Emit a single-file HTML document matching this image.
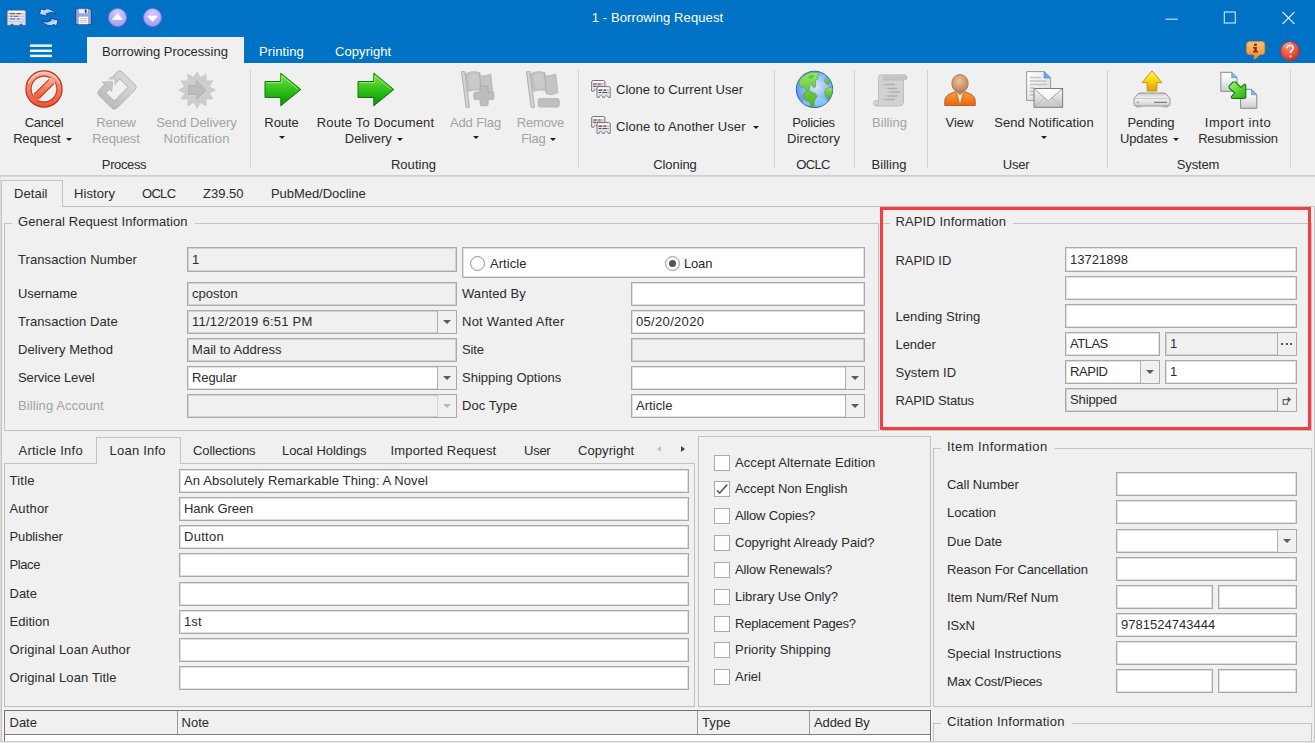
<!DOCTYPE html>
<html><head><meta charset="utf-8"><title>1 - Borrowing Request</title>
<style>
html,body{margin:0;padding:0}
body{width:1315px;height:743px;overflow:hidden;position:relative;background:#f0f0f0;font-family:"Liberation Sans",sans-serif;font-size:13px;color:#2b2b2b}
div,span,svg{position:absolute;box-sizing:border-box}
.t{white-space:nowrap;line-height:16px;height:16px;font-size:13px}
.c{text-align:center}
.d{color:#a3a3a3}
.w{color:#fff}
.f{border:1px solid #a9a9a9;box-shadow:inset 0 0 0 1px rgba(0,0,0,0.12);background:#fff;height:24px;line-height:22px;padding-left:4px;white-space:nowrap;overflow:hidden;font-size:13px}
.ro{background:#f0f0f0}
.h{background:#c2c2c2;height:1px}
.v{background:#c2c2c2;width:1px}
.sep{background:#d2d2d2;width:1px;top:70px;height:98px}
.gb{border:1px solid #c2c2c2}
.gt{background:#f0f0f0;padding:0 7px 0 6px;white-space:nowrap;line-height:16px;height:16px}
.dd{width:19px;border-left:1px solid #b0b0b0;background:#f0f0f0;top:0;right:0;bottom:0}
.ar{width:0;height:0;border-left:4px solid transparent;border-right:4px solid transparent;border-top:4px solid #5a5a5a}
.sa{width:0;height:0;border-left:3px solid transparent;border-right:3px solid transparent;border-top:3px solid #1e1e1e}
.cb{width:16px;height:16px;border:1px solid #ababab;background:#fff}
</style></head>
<body>
<div style="left:0;top:0;width:1315px;height:63px;background:#0072c6"></div>
<div class="t c w" style="left:507.5px;width:300px;top:10px;letter-spacing:0.10px;">1 - Borrowing Request</div>
<svg style="left:1160px;top:5px" width="145" height="24" viewBox="0 0 145 24"><path d="M5.5 14.2H18" stroke="#d4e6f5" stroke-width="1.1" fill="none"/><rect x="64.3" y="7" width="11" height="11" stroke="#d9e9f6" stroke-width="1.1" fill="none"/><path d="M122.5 7L134.5 19M134.5 7L122.5 19" stroke="#d9e9f6" stroke-width="1.1" fill="none"/></svg>
<svg style="left:29px;top:43px" width="24" height="16" viewBox="0 0 24 16"><rect x="0.9" y="1.4" width="22" height="2.5" fill="#fff" opacity="0.93"/><rect x="0.9" y="6.55" width="22" height="2.5" fill="#fff" opacity="0.93"/><rect x="0.9" y="11.7" width="22" height="2.4" fill="#fff" opacity="0.93"/></svg>
<div style="left:87px;top:37px;width:157px;height:26px;background:#f0f0f0"></div>
<div class="t " style="left:102px;top:44px;letter-spacing:-0.03px;">Borrowing Processing</div>
<div class="t w" style="left:259px;top:44px;letter-spacing:0.10px;">Printing</div>
<div class="t w" style="left:335px;top:44px;letter-spacing:0.07px;">Copyright</div>
<div style="left:0;top:175px;width:1315px;height:2px;background:#d7d7d7;border-top:1px solid #cecece"></div>
<div class="sep" style="left:250px"></div>
<div class="sep" style="left:578px"></div>
<div class="sep" style="left:774px"></div>
<div class="sep" style="left:854px"></div>
<div class="sep" style="left:927px"></div>
<div class="sep" style="left:1107px"></div>
<div class="sep" style="left:1290px"></div>
<div class="t c " style="left:-56.0px;width:200px;top:115px;letter-spacing:-0.32px;">Cancel</div>
<div class="t c " style="left:-57.7px;width:200px;top:131px;letter-spacing:-0.15px;">Request<span class="sa" style="position:relative;display:inline-block;top:-2px;margin-left:5px"></span></div>
<div class="t c d" style="left:16.0px;width:200px;top:115px;letter-spacing:-0.18px;">Renew</div>
<div class="t c d" style="left:16.0px;width:200px;top:131px;letter-spacing:-0.15px;">Request</div>
<div class="t c d" style="left:96.5px;width:200px;top:115px;letter-spacing:-0.03px;">Send Delivery</div>
<div class="t c d" style="left:96.5px;width:200px;top:131px;letter-spacing:0.15px;">Notification</div>
<div class="t c " style="left:24.0px;width:200px;top:157px;letter-spacing:-0.38px;">Process</div>
<div class="t c " style="left:181.5px;width:200px;top:115px;letter-spacing:-0.07px;">Route</div>
<div class="sa" style="left:278.5px;top:136px"></div>
<div class="t c " style="left:275.5px;width:200px;top:115px;letter-spacing:0.17px;">Route To Document</div>
<div class="t c " style="left:273.8px;width:200px;top:131px;letter-spacing:0.02px;">Delivery<span class="sa" style="position:relative;display:inline-block;top:-2px;margin-left:5px"></span></div>
<div class="t c d" style="left:375.5px;width:200px;top:115px;letter-spacing:-0.11px;">Add Flag</div>
<div class="sa" style="left:472.5px;top:136px"></div>
<div class="t c d" style="left:440.5px;width:200px;top:115px;letter-spacing:-0.19px;">Remove</div>
<div class="t c d" style="left:438.79999999999995px;width:200px;top:131px;letter-spacing:-0.24px;">Flag<span class="sa" style="position:relative;display:inline-block;top:-2px;margin-left:5px"></span></div>
<div class="t c " style="left:313.5px;width:200px;top:157px;letter-spacing:0.05px;">Routing</div>
<div class="t " style="left:616px;top:82px;letter-spacing:0.03px;">Clone to Current User</div>
<div class="t " style="left:616px;top:118.5px;letter-spacing:0.08px;">Clone to Another User<span class="sa" style="position:relative;display:inline-block;top:-2px;margin-left:7px"></span></div>
<div class="t c " style="left:575.0px;width:200px;top:157px;letter-spacing:-0.08px;">Cloning</div>
<div class="t c " style="left:713.5px;width:200px;top:115px;letter-spacing:-0.26px;">Policies</div>
<div class="t c " style="left:713.5px;width:200px;top:131px;letter-spacing:0.12px;">Directory</div>
<div class="t c " style="left:713.0px;width:200px;top:157px;letter-spacing:-0.70px;">OCLC</div>
<div class="t c d" style="left:789.5px;width:200px;top:115px;letter-spacing:0.02px;">Billing</div>
<div class="t c " style="left:789.0px;width:200px;top:157px;letter-spacing:0.02px;">Billing</div>
<div class="t c " style="left:859.5px;width:200px;top:115px;letter-spacing:-0.02px;">View</div>
<div class="t c " style="left:944.0px;width:200px;top:115px;letter-spacing:0.07px;">Send Notification</div>
<div class="sa" style="left:1041px;top:136px"></div>
<div class="t c " style="left:916.0px;width:200px;top:157px;letter-spacing:-0.25px;">User</div>
<div class="t c " style="left:1051.0px;width:200px;top:115px;letter-spacing:-0.11px;">Pending</div>
<div class="t c " style="left:1049.3px;width:200px;top:131px;letter-spacing:-0.09px;">Updates<span class="sa" style="position:relative;display:inline-block;top:-2px;margin-left:5px"></span></div>
<div class="t c " style="left:1138.0px;width:200px;top:115px;letter-spacing:0.44px;">Import into</div>
<div class="t c " style="left:1138.0px;width:200px;top:131px;letter-spacing:-0.16px;">Resubmission</div>
<div class="t c " style="left:1098.0px;width:200px;top:157px;letter-spacing:-0.13px;">System</div>
<svg width="0" height="0" style="left:0;top:0"><defs>
<linearGradient id="gGreen" x1="0" y1="0" x2="0" y2="1"><stop offset="0" stop-color="#7be04a"/><stop offset="0.5" stop-color="#34c21a"/><stop offset="1" stop-color="#0c8f06"/></linearGradient>
<linearGradient id="gRed" x1="0" y1="0" x2="0" y2="1"><stop offset="0" stop-color="#ffb6a0"/><stop offset="0.5" stop-color="#f47a5c"/><stop offset="1" stop-color="#ec5634"/></linearGradient>
<linearGradient id="gGray" x1="0" y1="0" x2="0" y2="1"><stop offset="0" stop-color="#d9d9d9"/><stop offset="1" stop-color="#bcbcbc"/></linearGradient>
<linearGradient id="gOrange" x1="0" y1="0" x2="0" y2="1"><stop offset="0" stop-color="#f9a04a"/><stop offset="1" stop-color="#e8650e"/></linearGradient>
<radialGradient id="gHead" cx="0.45" cy="0.35" r="0.7"><stop offset="0" stop-color="#e8c497"/><stop offset="1" stop-color="#b97a4c"/></radialGradient>
<radialGradient id="gGlobe" cx="0.4" cy="0.3" r="0.8"><stop offset="0" stop-color="#8fc6ff"/><stop offset="0.6" stop-color="#3f8df0"/><stop offset="1" stop-color="#1f5fd0"/></radialGradient>
<linearGradient id="gYellow" x1="0" y1="0" x2="0" y2="1"><stop offset="0" stop-color="#fff56e"/><stop offset="0.45" stop-color="#ffd90a"/><stop offset="1" stop-color="#dba008"/></linearGradient>
<linearGradient id="gDrive" x1="0" y1="0" x2="0" y2="1"><stop offset="0" stop-color="#c9c9c9"/><stop offset="0.4" stop-color="#f4f4f4"/><stop offset="1" stop-color="#d0d0d0"/></linearGradient>
<linearGradient id="gDoc" x1="0" y1="0" x2="1" y2="1"><stop offset="0" stop-color="#ffffff"/><stop offset="1" stop-color="#d4d4d4"/></linearGradient>
<linearGradient id="gInfo" x1="0" y1="0" x2="0" y2="1"><stop offset="0" stop-color="#fdc27a"/><stop offset="1" stop-color="#f08a2a"/></linearGradient>
<radialGradient id="gHelp" cx="0.4" cy="0.3" r="0.8"><stop offset="0" stop-color="#f58a76"/><stop offset="0.7" stop-color="#e0442e"/><stop offset="1" stop-color="#c02a18"/></radialGradient>
<radialGradient id="gLav" cx="0.5" cy="0.25" r="0.85"><stop offset="0" stop-color="#d2ccff"/><stop offset="1" stop-color="#9f95f2"/></radialGradient>
<linearGradient id="gEnv" x1="0" y1="0" x2="0" y2="1"><stop offset="0" stop-color="#f6f6f6"/><stop offset="1" stop-color="#c4c4c4"/></linearGradient>
</defs></svg>
<svg style="left:7px;top:10.2px" width="19" height="16" viewBox="0 0 19 16"><path d="M0.5 2Q0.5 0.5 2 0.5H17Q18.5 0.5 18.5 2V15H15.5V13.2H12.8V15H6.2V13.2H3.5V15H0.5Z" fill="#f4f2f4" stroke="#b0a090" stroke-width="0.7"/><path d="M1 3.7H18" stroke="#f4a0a8" stroke-width="1.1"/><path d="M3 3.7H8M9.5 3.7H14" stroke="#503838" stroke-width="0.9"/><path d="M1 6.3H18M1 8.9H18M1 11.5H18" stroke="#b4c6f8" stroke-width="1.5"/><path d="M3.2 6.3H5.5M7 6.3H11M3.2 8.9H8M10 8.9H12.5" stroke="#585868" stroke-width="0.9"/><path d="M0.8 13.4H18.2" stroke="#e4dcd4" stroke-width="1"/></svg><svg style="left:39.4px;top:8px" width="20" height="19" viewBox="0 0 20 19"><defs><linearGradient id="gRef" x1="0" y1="0" x2="1" y2="1"><stop offset="0" stop-color="#eaf6ff"/><stop offset="1" stop-color="#58acf4"/></linearGradient></defs><path d="M0.4 6.5L2 0.5L4.5 2Q10.6 -1.6 17.3 5.8Q11.4 3.2 7.3 6L8.5 8.3Z" fill="url(#gRef)" stroke="#0a3cae" stroke-width="0.9" stroke-linejoin="round"/><g transform="rotate(180 9.75 9.25)"><path d="M0.4 6.5L2 0.5L4.5 2Q10.6 -1.6 17.3 5.8Q11.4 3.2 7.3 6L8.5 8.3Z" fill="url(#gRef)" stroke="#0a3cae" stroke-width="0.9" stroke-linejoin="round"/></g></svg><svg style="left:75px;top:7.9px" width="17" height="17.5" viewBox="0 0 17 17.5"><path d="M0.7 0.7H14.6L16.4 2.5V16.6H0.7Z" fill="#93a6e2" stroke="#2c3f92" stroke-width="1"/><rect x="3.5" y="0.9" width="9.6" height="4.8" fill="#eceff6" stroke="#7486c0" stroke-width="0.4"/><rect x="9.8" y="1.5" width="1.8" height="3.3" fill="#26387e"/><rect x="3.3" y="8.2" width="10.2" height="8" fill="#fafafc" stroke="#7486c0" stroke-width="0.4"/><path d="M4.8 10.6H12M4.8 12.4H12M4.8 14.2H12" stroke="#b4bccc" stroke-width="0.8"/></svg><svg style="left:108.2px;top:8.2px" width="19" height="19" viewBox="0 0 19 19"><circle cx="9.5" cy="9.5" r="9" fill="url(#gLav)" stroke="#8078dc" stroke-width="0.9"/><path d="M3.8 11.8L9.5 5.6L15.2 11.8Z" fill="#fff"/></svg><svg style="left:142.5px;top:8.2px" width="19" height="19" viewBox="0 0 19 19"><circle cx="9.5" cy="9.5" r="9" fill="url(#gLav)" stroke="#8078dc" stroke-width="0.9"/><path d="M3.8 7.7L9.5 13.9L15.2 7.7Z" fill="#fff"/></svg>
<svg style="left:24.3px;top:69.35px" width="40" height="40" viewBox="0 0 40 40"><circle cx="20" cy="20" r="18.1" fill="url(#gRed)" stroke="#b93222" stroke-width="1.2"/><circle cx="20" cy="20" r="12.9" fill="#f1eeee" stroke="#bf3a24" stroke-width="1.1"/><path d="M8.2 27.2L27.2 8.2L31.8 12.8L12.8 31.8Z" fill="url(#gRed)"/><path d="M10.3 25.1L25.1 10.3M14.9 29.7L29.7 14.9" stroke="#bf3a24" stroke-width="1.1"/><path d="M4.5 14Q9 4 20 3.6Q31 4 35.5 14" fill="none" stroke="#ffd0c0" stroke-width="1.6" opacity="0.7"/></svg>
<svg style="left:96.5px;top:69.5px" width="40" height="40" viewBox="0 0 40 40"><g transform="translate(20,20) rotate(45)"><path fill-rule="evenodd" d="M-9 -16.5H9Q12.6 -16.5 12.6 -12.9V12.9Q12.6 16.5 9 16.5H-9Q-12.6 16.5 -12.6 12.9V-12.9Q-12.6 -16.5 -9 -16.5Z M-5.9 -9.8V9.8H5.9V-9.8Z" fill="url(#gGray)" stroke="#adadad" stroke-width="0.9"/><path d="M-16.2 4.6L-9.25 -2.9L-2.3 4.6Z" fill="#c6c6c6" stroke="#adadad" stroke-width="0.7"/><path d="M-14.2 -2.6L-13.2 -6.5L-9.25 -7.8L-5.4 -6.5L-4.6 -2.6" fill="#c9c9c9" stroke="none"/><path d="M-17.3 4.3L-9.25 -4.6L-1.2 4.3" stroke="#f0f0f0" stroke-width="1.5" fill="none"/></g></svg>
<svg style="left:177px;top:69.5px" width="40" height="40" viewBox="0 0 40 40"><polygon points="20.0,1.7 23.3,7.6 29.1,4.2 29.1,10.9 35.8,10.8 32.4,16.7 38.3,20.0 32.4,23.3 35.8,29.1 29.1,29.1 29.1,35.8 23.3,32.4 20.0,38.3 16.7,32.4 10.9,35.8 10.9,29.1 4.2,29.2 7.6,23.3 1.7,20.0 7.6,16.7 4.2,10.8 10.9,10.9 10.8,4.2 16.7,7.6" fill="#cdcdcd" stroke="#c2c2c2" stroke-width="0.6"/><path d="M11.5 15.5H19.5V10.5L29 20L19.5 29.5V24.5H11.5Z" fill="#bcbcbc" stroke="#adadad" stroke-width="0.7"/></svg>
<svg style="left:264px;top:72px" width="38" height="35" viewBox="0 0 38 35"><path d="M1 9.5H16.8V1.2L36.8 17.5L16.8 33.8V25.5H1Z" fill="url(#gGreen)" stroke="#0a7a05" stroke-width="1" stroke-linejoin="round"/><path d="M2.2 10.7H17.7V4L33.5 17" fill="none" stroke="#a8f080" stroke-width="1" opacity="0.8"/></svg>
<svg style="left:357px;top:72px" width="38" height="35" viewBox="0 0 38 35"><path d="M1 9.5H16.8V1.2L36.8 17.5L16.8 33.8V25.5H1Z" fill="url(#gGreen)" stroke="#0a7a05" stroke-width="1" stroke-linejoin="round"/><path d="M2.2 10.7H17.7V4L33.5 17" fill="none" stroke="#a8f080" stroke-width="1" opacity="0.8"/></svg>
<svg style="left:461px;top:70.5px" width="35" height="37" viewBox="0 0 35 37"><path d="M2.3 1.6L6.7 35.4" stroke="#b4b4b4" stroke-width="4.4" stroke-linecap="round"/><path d="M2.3 1.8L6.7 35.2" stroke="#d6d6d6" stroke-width="2" stroke-linecap="round"/><path d="M5 2.6C9 0.6 14 0.1 18.6 1.6L19 4.9C22 5.1 26 4.5 29.8 3L31.8 21.6C28 23.8 23 24.1 20.5 22.6L20.1 19.5C15 18.5 10.5 19 7.3 20.6Z" fill="#c4c4c4" stroke="#b3b3b3" stroke-width="0.8"/><path d="M18.6 1.8L20.4 22.4" stroke="#b0b0b0" stroke-width="1.2"/><path d="M8 4.5C11 3.2 14 3 17 3.8L18.3 17C15 16.3 12 16.5 9.3 17.6Z" fill="#cfcfcf" opacity="0.7"/><path d="M20.6 15H25.6Q27.1 15 27.1 16.5V21.1H31.4Q32.9 21.1 32.9 22.6V27.1Q32.9 28.6 31.4 28.6H27.1V33.2Q27.1 34.7 25.6 34.7H20.6Q19.1 34.7 19.1 33.2V28.6H14.3Q12.8 28.6 12.8 27.1V22.6Q12.8 21.1 14.3 21.1H19.1V16.5Q19.1 15 20.6 15Z" fill="#bdbdbd" stroke="#ababab" stroke-width="0.8"/></svg>
<svg style="left:526px;top:70.5px" width="35" height="37" viewBox="0 0 35 37"><path d="M2.3 1.6L6.7 35.4" stroke="#b4b4b4" stroke-width="4.4" stroke-linecap="round"/><path d="M2.3 1.8L6.7 35.2" stroke="#d6d6d6" stroke-width="2" stroke-linecap="round"/><path d="M5 2.6C9 0.6 14 0.1 18.6 1.6L19 4.9C22 5.1 26 4.5 29.8 3L31.8 21.6C28 23.8 23 24.1 20.5 22.6L20.1 19.5C15 18.5 10.5 19 7.3 20.6Z" fill="#c4c4c4" stroke="#b3b3b3" stroke-width="0.8"/><path d="M18.6 1.8L20.4 22.4" stroke="#b0b0b0" stroke-width="1.2"/><path d="M8 4.5C11 3.2 14 3 17 3.8L18.3 17C15 16.3 12 16.5 9.3 17.6Z" fill="#cfcfcf" opacity="0.7"/><rect x="12.2" y="27.6" width="21" height="8.4" rx="2" fill="#c0c0c0" stroke="#adadad" stroke-width="0.8"/></svg>
<svg style="left:590.5px;top:79.8px" width="21" height="19" viewBox="0 0 21 19"><g transform="translate(0.2,0)"><path d="M0.5 2Q0.5 0.5 2 0.5H12.2Q13.7 0.5 13.7 2V11.2H11.6Q11.4 9.2 9.8 9.2Q8.2 9.2 8 11.2H6.2Q6 9.2 4.4 9.2Q2.8 9.2 2.6 11.2H0.5Z" fill="#fbfbfb" stroke="#727272" stroke-width="1"/><path d="M1.2 8.6H13" stroke="#dedad2" stroke-width="1.6"/><path d="M1.2 4H13" stroke="#f6a8a8" stroke-width="1.5"/><path d="M2.2 4H5.5M7 4H9.5" stroke="#5a4a4a" stroke-width="1.1"/><path d="M1.2 6.4H13" stroke="#8fb0f2" stroke-width="1.5"/><path d="M2.5 6.4H4.5M6 6.4H10.5" stroke="#4a5060" stroke-width="1.1"/></g><g transform="translate(5.5,6.1)"><path d="M0.5 2Q0.5 0.5 2 0.5H12.2Q13.7 0.5 13.7 2V11.2H11.6Q11.4 9.2 9.8 9.2Q8.2 9.2 8 11.2H6.2Q6 9.2 4.4 9.2Q2.8 9.2 2.6 11.2H0.5Z" fill="#fbfbfb" stroke="#727272" stroke-width="1"/><path d="M1.2 8.6H13" stroke="#dedad2" stroke-width="1.6"/><path d="M1.2 4H13" stroke="#f6a8a8" stroke-width="1.5"/><path d="M2.2 4H5.5M7 4H9.5" stroke="#5a4a4a" stroke-width="1.1"/><path d="M1.2 6.4H13" stroke="#8fb0f2" stroke-width="1.5"/><path d="M2.5 6.4H4.5M6 6.4H10.5" stroke="#4a5060" stroke-width="1.1"/></g></svg>
<svg style="left:590.5px;top:116.4px" width="21" height="19" viewBox="0 0 21 19"><g transform="translate(0.2,0)"><path d="M0.5 2Q0.5 0.5 2 0.5H12.2Q13.7 0.5 13.7 2V11.2H11.6Q11.4 9.2 9.8 9.2Q8.2 9.2 8 11.2H6.2Q6 9.2 4.4 9.2Q2.8 9.2 2.6 11.2H0.5Z" fill="#fbfbfb" stroke="#727272" stroke-width="1"/><path d="M1.2 8.6H13" stroke="#dedad2" stroke-width="1.6"/><path d="M1.2 4H13" stroke="#f6a8a8" stroke-width="1.5"/><path d="M2.2 4H5.5M7 4H9.5" stroke="#5a4a4a" stroke-width="1.1"/><path d="M1.2 6.4H13" stroke="#8fb0f2" stroke-width="1.5"/><path d="M2.5 6.4H4.5M6 6.4H10.5" stroke="#4a5060" stroke-width="1.1"/></g><g transform="translate(5.5,6.1)"><path d="M0.5 2Q0.5 0.5 2 0.5H12.2Q13.7 0.5 13.7 2V11.2H11.6Q11.4 9.2 9.8 9.2Q8.2 9.2 8 11.2H6.2Q6 9.2 4.4 9.2Q2.8 9.2 2.6 11.2H0.5Z" fill="#fbfbfb" stroke="#727272" stroke-width="1"/><path d="M1.2 8.6H13" stroke="#dedad2" stroke-width="1.6"/><path d="M1.2 4H13" stroke="#f6a8a8" stroke-width="1.5"/><path d="M2.2 4H5.5M7 4H9.5" stroke="#5a4a4a" stroke-width="1.1"/><path d="M1.2 6.4H13" stroke="#8fb0f2" stroke-width="1.5"/><path d="M2.5 6.4H4.5M6 6.4H10.5" stroke="#4a5060" stroke-width="1.1"/></g></svg>
<svg style="left:795px;top:70px" width="39" height="39" viewBox="0 0 39 39"><defs><clipPath id="cpG"><circle cx="19.5" cy="19.4" r="18"/></clipPath><radialGradient id="gOcean" cx="0.55" cy="0.42" r="0.62"><stop offset="0" stop-color="#dbe9ff"/><stop offset="0.55" stop-color="#8db9f8"/><stop offset="1" stop-color="#4f8fea"/></radialGradient><linearGradient id="gLand" x1="0" y1="0" x2="0" y2="1"><stop offset="0" stop-color="#9be66a"/><stop offset="0.5" stop-color="#6cc845"/><stop offset="1" stop-color="#55b032"/></linearGradient></defs><circle cx="19.5" cy="19.4" r="18.2" fill="url(#gOcean)" stroke="#2f62cf" stroke-width="1"/><ellipse cx="20" cy="32" rx="12" ry="4.5" fill="#9ad8ff" opacity="0.6" clip-path="url(#cpG)"/><g clip-path="url(#cpG)" fill="url(#gLand)" stroke="#4fa52e" stroke-width="0.7" stroke-linejoin="round"><path d="M3.9 11.5L6.1 7.7L10.8 4.5L16.5 2.2L24.7 2.8L22.2 6.4L22.8 8.6L20.3 10.2L20.9 15.9L19.4 17.8L17.5 16.5L17.2 13.4L14.6 15.9L14 19.7L15.9 22.2L20.3 23.5L21.9 26.6L19 31.1L19 37.5L15.3 37.5L15.3 32.3L10.2 30.4L8 26L9.9 22.2L12.1 21L10.2 19L7.7 15.9L6.1 17.8L4.5 15.3Z"/><path d="M29.2 10.2L31.4 7.3L34.9 12.1L33 14.6L30.4 12.7Z"/><path d="M29.5 22.2L31.1 18.7L35.5 17.2L38 18.5L36.5 26.6L33 29.2L30.8 26Z"/></g><ellipse cx="16.2" cy="6.6" rx="2.9" ry="1.6" transform="rotate(-25 16.2 6.6)" fill="#58b86a" opacity="0.8"/></svg>
<svg style="left:873px;top:73.5px" width="35" height="33" viewBox="0 0 35 33"><path d="M5.5 3.5Q5.5 0.8 9 0.8H31Q34 0.8 34 3.5Q34 6 31 6H30.5V27Q30.5 32 26 32H3.5Q0.6 32 0.6 29Q0.6 26.5 3.5 26.5H5.5Z" fill="#d2d2d2" stroke="#bababa" stroke-width="0.9"/><path d="M10 1.4H31.3Q33.8 1.4 33.8 3.6Q33.8 5.9 31.3 5.9H10Z" fill="#c4c4c4"/><path d="M9 6H30.5" stroke="#b8b8b8" stroke-width="0.8"/><path d="M5.5 26.5V29Q5.5 32 3.5 32" fill="none" stroke="#bababa" stroke-width="0.8"/><path d="M12 10.5H22M14.5 14.5H24.5M17 18H27M14.5 22H24.5M12 25.5H22" stroke="#b0b0b0" stroke-width="1.6"/><path d="M10 10.5H11M12.5 14.5H13.5M15 18H16M12.5 22H13.5M10 25.5H11" stroke="#a8a8a8" stroke-width="1.2"/></svg>
<svg style="left:944px;top:73.8px" width="32" height="32.5" viewBox="0 0 32 32.5"><path d="M0.8 31.6V27.5Q1 21.2 7 19.4L12.5 17.4H19.5L25 19.4Q31 21.2 31.2 27.5V31.6Z" fill="url(#gOrange)" stroke="#b8500c" stroke-width="0.9"/><path d="M12 19.5L15 30.5M20 19.5L17 30.5" stroke="#d86a14" stroke-width="0.7" fill="none"/><path d="M13.5 18.5L16 29L18.5 18.5Z" fill="#fff8f0" stroke="#d8d0c8" stroke-width="0.4"/><path d="M13 18.3L16 21.5L19 18.3" fill="#c8864f" stroke="none"/><ellipse cx="16" cy="9.5" rx="8.2" ry="9" fill="url(#gHead)" stroke="#a86a3c" stroke-width="0.8"/></svg>
<svg style="left:1026.2px;top:71px" width="37.5" height="37" viewBox="0 0 37.5 37"><path d="M0.6 0.6H18L24.6 7V29.4H0.6Z" fill="url(#gDoc)" stroke="#8f8f8f" stroke-width="0.9"/><path d="M18 0.6L24.6 7H18Z" fill="#5ea8ec" stroke="#3c86d0" stroke-width="0.6"/><path d="M4 6.5H15M4 10H20.5M4 13.5H20.5M4 17H8M4 20.5H8M4 24H8" stroke="#c4c4c4" stroke-width="1.3"/><rect x="8" y="17.5" width="28.6" height="18.8" fill="url(#gEnv)" stroke="#7e7e7e" stroke-width="1"/><path d="M8.5 18L22.3 30L36 18" fill="#fbfbfb" stroke="#9a9a9a" stroke-width="0.9"/><path d="M8.5 36L18.5 26.5M36 36L26 26.5" stroke="#b0b0b0" stroke-width="0.8"/></svg>
<svg style="left:1132.5px;top:70px" width="38" height="38" viewBox="0 0 38 38"><path d="M19 0.8L28.8 12.6H23.8V21H14.2V12.6H9.2Z" fill="url(#gYellow)" stroke="#c08a10" stroke-width="0.9" stroke-linejoin="round"/><path d="M5.8 23H32.2L37 28.5V34Q37 36 35 36H3Q1 36 1 34V28.5Z" fill="url(#gDrive)" stroke="#8c8c8c" stroke-width="0.9"/><path d="M1.5 28.5H36.5" stroke="#b5b5b5" stroke-width="0.7"/><circle cx="4.8" cy="32.3" r="0.9" fill="#4cc21e"/><path d="M21 32.3H34" stroke="#6a6a6a" stroke-width="1"/><path d="M3 36.8H8M30 36.8H35" stroke="#9a9a9a" stroke-width="0.9"/></svg>
<svg style="left:1220px;top:70.5px" width="38" height="38" viewBox="0 0 38 38"><defs><linearGradient id="gDocV" x1="0" y1="0" x2="0" y2="1"><stop offset="0" stop-color="#ffffff"/><stop offset="0.35" stop-color="#f4f4f4"/><stop offset="1" stop-color="#cdcdcd"/></linearGradient><linearGradient id="gGreen2" x1="0" y1="0" x2="1" y2="1"><stop offset="0" stop-color="#b4f58a"/><stop offset="0.5" stop-color="#62d23a"/><stop offset="1" stop-color="#2faa14"/></linearGradient></defs><g transform="translate(0.3,0.8)"><path d="M0.5 0.5H11.3L16.7 5.9V19.5H0.5Z" fill="url(#gDocV)" stroke="#8a8a8a" stroke-width="1"/><path d="M11.3 0.5L16.7 5.9H11.3Z" fill="#78b8f4" stroke="#3c86d0" stroke-width="0.5"/></g><g transform="translate(20.1,17.8)"><path d="M0.5 0.5H11.3L16.7 5.9V19.5H0.5Z" fill="url(#gDocV)" stroke="#8a8a8a" stroke-width="1"/><path d="M11.3 0.5L16.7 5.9H11.3Z" fill="#78b8f4" stroke="#3c86d0" stroke-width="0.5"/></g><path d="M8.9 15.3L13 11H15.4L20.7 16.2L24.7 13.1L25.8 14.1V26.5L24.7 27.4H12L11.1 25.8L14.8 21.8L9.6 17.5Z" fill="url(#gGreen2)" stroke="#0e7a0a" stroke-width="1.1" stroke-linejoin="round"/></svg>
<svg style="left:1246px;top:41px" width="19.5" height="19.2" viewBox="0 0 19.5 19.2"><path d="M3.4 0.6H15.8Q18.8 0.6 18.8 3.6V10.6Q18.8 13.6 15.8 13.6H14L8.3 18.6L8 13.6H3.4Q0.6 13.6 0.6 10.6V3.6Q0.6 0.6 3.4 0.6Z" fill="url(#gInfo)" stroke="#e8861e" stroke-width="0.9" stroke-linejoin="round"/><rect x="8.1" y="2.6" width="2.7" height="2.3" fill="#962a06"/><path d="M7 6.1H10.8V10H12V11.5H7V10H8.3V7.5H7Z" fill="#962a06"/></svg>
<svg style="left:1280px;top:40.5px" width="20" height="20" viewBox="0 0 20 20"><circle cx="10" cy="10" r="9.4" fill="url(#gHelp)" stroke="#b8301c" stroke-width="0.7"/><path d="M7 7.3Q7 4.3 10.1 4.3Q13.2 4.3 13.2 7Q13.2 8.6 11.6 9.5Q10.4 10.2 10.4 12.2" fill="none" stroke="#fff" stroke-width="1.7" opacity="0.95"/><circle cx="10.4" cy="15.3" r="1.15" fill="#fff" opacity="0.95"/><path d="M3.5 6.5Q6 2 11 1.6" fill="none" stroke="#ffc0b0" stroke-width="1.2" opacity="0.6"/></svg>
<div class="h" style="left:1px;top:206px;width:1314px"></div>
<div class="v" style="left:1px;top:206px;height:537px"></div>
<div class="v" style="left:1314px;top:206px;height:535px"></div>
<div style="left:0;top:177px;width:1px;height:566px;background:#e1dcdb"></div>
<div style="left:1px;top:180px;width:62px;height:27px;border:1px solid #c2c2c2;border-bottom:none;background:#f0f0f0"></div>
<div class="t " style="left:14px;top:186px;letter-spacing:0.05px;">Detail</div>
<div class="t " style="left:74px;top:186px;letter-spacing:0.08px;">History</div>
<div class="t " style="left:142px;top:186px;letter-spacing:-0.70px;">OCLC</div>
<div class="t " style="left:203px;top:186px;letter-spacing:0.01px;">Z39.50</div>
<div class="t " style="left:271px;top:186px;letter-spacing:-0.05px;">PubMed/Docline</div>
<div class="gb" style="left:4px;top:223px;width:875px;height:208px"></div><div class="gt" style="left:12px;top:214px;letter-spacing:0.10px;">General Request Information</div>
<div class="t " style="left:18px;top:252px;letter-spacing:0.09px;">Transaction Number</div>
<div class="f ro" style="left:187px;top:247px;width:270px;height:25px;line-height:23px;letter-spacing:0.03px;">1</div>
<div class="t " style="left:18px;top:286px;letter-spacing:-0.12px;">Username</div>
<div class="f ro" style="left:187px;top:282px;width:270px;height:24px;line-height:22px;letter-spacing:0.03px;">cposton</div>
<div class="t " style="left:18px;top:314px;letter-spacing:0.08px;">Transaction Date</div>
<div class="f ro" style="left:187px;top:310px;width:270px;height:24px;line-height:22px;letter-spacing:0.25px;">11/12/2019 6:51 PM<div class="dd "><div class="ar" style="left:5px;top:9px"></div></div></div>
<div class="t " style="left:18px;top:342px;letter-spacing:0.07px;">Delivery Method</div>
<div class="f ro" style="left:187px;top:338px;width:270px;height:24px;line-height:22px;letter-spacing:0.05px;">Mail to Address</div>
<div class="t " style="left:18px;top:370px;letter-spacing:-0.12px;">Service Level</div>
<div class="f " style="left:187px;top:366px;width:270px;height:24px;line-height:22px;letter-spacing:-0.10px;">Regular<div class="dd "><div class="ar" style="left:5px;top:9px"></div></div></div>
<div class="t d" style="left:18px;top:398px;letter-spacing:0.08px;">Billing Account</div>
<div class="f ro" style="left:187px;top:394px;width:270px;height:24px;line-height:22px;"><div class="dd" style="border-left-color:#d5d5d5"><div class="ar" style="left:5px;top:9px;border-top-color:#b8b8b8"></div></div></div>
<div class="f" style="left:462px;top:247px;width:403px;height:31px"></div>
<div style="left:470px;top:256px;width:15px;height:15px;border:1px solid #979797;border-radius:50%;background:#fff;box-shadow:inset 0 0 0 1px rgba(0,0,0,0.06)"></div>
<div class="t " style="left:490px;top:255.5px;letter-spacing:0.04px;">Article</div>
<div style="left:665px;top:256px;width:15px;height:15px;border:1px solid #979797;border-radius:50%;background:#fff;box-shadow:inset 0 0 0 1px rgba(0,0,0,0.06)"></div>
<div style="left:669px;top:260px;width:7px;height:7px;border-radius:50%;background:#555"></div>
<div class="t " style="left:684px;top:255.5px;letter-spacing:-0.17px;">Loan</div>
<div class="t " style="left:462px;top:286px;letter-spacing:0.08px;">Wanted By</div>
<div class="f " style="left:631px;top:282px;width:234px;height:24px;line-height:22px;"></div>
<div class="t " style="left:462px;top:314px;letter-spacing:0.25px;">Not Wanted After</div>
<div class="f " style="left:631px;top:310px;width:234px;height:24px;line-height:22px;letter-spacing:0.32px;">05/20/2020</div>
<div class="t " style="left:462px;top:342px;letter-spacing:-0.13px;">Site</div>
<div class="f ro" style="left:631px;top:338px;width:234px;height:24px;line-height:22px;"></div>
<div class="t " style="left:462px;top:370px;letter-spacing:0.02px;">Shipping Options</div>
<div class="f " style="left:631px;top:366px;width:234px;height:24px;line-height:22px;"><div class="dd "><div class="ar" style="left:5px;top:9px"></div></div></div>
<div class="t " style="left:462px;top:398px;letter-spacing:0.07px;">Doc Type</div>
<div class="f " style="left:631px;top:394px;width:234px;height:24px;line-height:22px;letter-spacing:0.04px;">Article<div class="dd "><div class="ar" style="left:5px;top:9px"></div></div></div>
<div class="gb" style="left:882px;top:223px;width:430px;height:208px"></div><div class="gt" style="left:889.5px;top:214px;letter-spacing:0.13px;">RAPID Information</div>
<div class="t " style="left:895.5px;top:252.5px;letter-spacing:-0.08px;">RAPID ID</div>
<div class="t " style="left:895.5px;top:308.5px;letter-spacing:0.07px;">Lending String</div>
<div class="t " style="left:895.5px;top:336.5px;letter-spacing:-0.05px;">Lender</div>
<div class="t " style="left:895.5px;top:364.5px;letter-spacing:0.08px;">System ID</div>
<div class="t " style="left:895.5px;top:392.5px;letter-spacing:-0.15px;">RAPID Status</div>
<div class="f " style="left:1065px;top:247px;width:232px;height:25px;line-height:23px;letter-spacing:0.03px;">13721898</div>
<div class="f " style="left:1065px;top:276px;width:232px;height:24px;line-height:22px;"></div>
<div class="f " style="left:1065px;top:304px;width:232px;height:24px;line-height:22px;"></div>
<div class="f " style="left:1065px;top:332px;width:95px;height:24px;line-height:22px;letter-spacing:-0.49px;">ATLAS</div>
<div class="f ro" style="left:1165px;top:332px;width:132px;height:24px;line-height:22px;letter-spacing:0.03px;">1<div class="dd"><div style="left:3px;top:10px;width:2px;height:2px;background:#555"></div><div style="left:7.5px;top:10px;width:2px;height:2px;background:#555"></div><div style="left:12px;top:10px;width:2px;height:2px;background:#555"></div></div></div>
<div class="f " style="left:1065px;top:360px;width:95px;height:24px;line-height:22px;letter-spacing:-0.44px;">RAPID<div class="dd "><div class="ar" style="left:5px;top:9px"></div></div></div>
<div class="f " style="left:1165px;top:360px;width:132px;height:24px;line-height:22px;letter-spacing:0.03px;">1</div>
<div class="f ro" style="left:1065px;top:388px;width:232px;height:24px;line-height:22px;letter-spacing:-0.11px;">Shipped<div class="dd"><svg style="left:4px;top:6.5px" width="10" height="10" viewBox="0 0 10 10"><path d="M3.2 3.6H1.2V8.2H5.6V6.6" stroke="#555" stroke-width="1.1" fill="none"/><path d="M3.2 3.6H7" stroke="#555" stroke-width="1.1" fill="none"/><path d="M5.6 0.4L9.2 3.6L5.6 6.8Z" fill="#555"/></svg></div></div>
<div style="left:880px;top:207px;width:431px;height:223px;border:3px solid #f83c3e"></div>
<div style="left:4px;top:463px;width:691px;height:244px;border:1px solid #c2c2c2"></div>
<div style="left:96px;top:437px;width:85px;height:27px;border:1px solid #c2c2c2;border-bottom:none;background:#f0f0f0"></div>
<div class="t " style="left:18.5px;top:442.5px;letter-spacing:0.25px;">Article Info</div>
<div class="t " style="left:109.5px;top:442.5px;letter-spacing:0.23px;">Loan Info</div>
<div class="t " style="left:193px;top:442.5px;letter-spacing:-0.10px;">Collections</div>
<div class="t " style="left:282px;top:442.5px;letter-spacing:-0.05px;">Local Holdings</div>
<div class="t " style="left:390.5px;top:442.5px;letter-spacing:0.16px;">Imported Request</div>
<div class="t " style="left:524px;top:442.5px;letter-spacing:-0.25px;">User</div>
<div class="t " style="left:578px;top:442.5px;letter-spacing:0.07px;">Copyright</div>
<div style="left:657px;top:446px;width:0;height:0;border-top:3.5px solid transparent;border-bottom:3.5px solid transparent;border-right:4px solid #c0c0c0"></div>
<div style="left:681px;top:446px;width:0;height:0;border-top:3.5px solid transparent;border-bottom:3.5px solid transparent;border-left:4px solid #404040"></div>
<div class="t " style="left:9.5px;top:473px;letter-spacing:0.24px;">Title</div>
<div class="f " style="left:179px;top:469px;width:510px;height:24px;line-height:22px;letter-spacing:0.11px;">An Absolutely Remarkable Thing: A Novel</div>
<div class="t " style="left:9.5px;top:501px;letter-spacing:0.16px;">Author</div>
<div class="f " style="left:179px;top:497px;width:510px;height:24px;line-height:22px;letter-spacing:-0.09px;">Hank Green</div>
<div class="t " style="left:9.5px;top:529px;letter-spacing:-0.10px;">Publisher</div>
<div class="f " style="left:179px;top:525px;width:510px;height:24px;line-height:22px;letter-spacing:0.28px;">Dutton</div>
<div class="t " style="left:9.5px;top:557px;letter-spacing:-0.41px;">Place</div>
<div class="f " style="left:179px;top:553px;width:510px;height:24px;line-height:22px;"></div>
<div class="t " style="left:9.5px;top:586px;letter-spacing:-0.01px;">Date</div>
<div class="f " style="left:179px;top:582px;width:510px;height:24px;line-height:22px;"></div>
<div class="t " style="left:9.5px;top:614px;letter-spacing:0.04px;">Edition</div>
<div class="f " style="left:179px;top:610px;width:510px;height:24px;line-height:22px;letter-spacing:0.10px;">1st</div>
<div class="t " style="left:9.5px;top:642px;letter-spacing:0.12px;">Original Loan Author</div>
<div class="f " style="left:179px;top:638px;width:510px;height:24px;line-height:22px;"></div>
<div class="t " style="left:9.5px;top:670px;letter-spacing:0.12px;">Original Loan Title</div>
<div class="f " style="left:179px;top:666px;width:510px;height:24px;line-height:22px;"></div>
<div style="left:698px;top:436px;width:233px;height:271px;border:1px solid #c2c2c2"></div>
<div class="cb" style="left:714px;top:454.5px"></div>
<div class="t " style="left:735px;top:454.5px;letter-spacing:0.10px;">Accept Alternate Edition</div>
<div class="cb" style="left:714px;top:481.35px"></div>
<svg style="left:714px;top:481.35px" width="16" height="16" viewBox="0 0 16 16"><path d="M3 9.2L5.6 12L13.2 3.6" stroke="#5c5c5c" stroke-width="1.6" fill="none"/></svg>
<div class="t " style="left:735px;top:481.35px;letter-spacing:-0.05px;">Accept Non English</div>
<div class="cb" style="left:714px;top:508.2px"></div>
<div class="t " style="left:735px;top:508.2px;letter-spacing:-0.17px;">Allow Copies?</div>
<div class="cb" style="left:714px;top:535.05px"></div>
<div class="t " style="left:735px;top:535.05px;letter-spacing:-0.00px;">Copyright Already Paid?</div>
<div class="cb" style="left:714px;top:561.9px"></div>
<div class="t " style="left:735px;top:561.9px;letter-spacing:-0.12px;">Allow Renewals?</div>
<div class="cb" style="left:714px;top:588.75px"></div>
<div class="t " style="left:735px;top:588.75px;letter-spacing:-0.06px;">Library Use Only?</div>
<div class="cb" style="left:714px;top:615.6px"></div>
<div class="t " style="left:735px;top:615.6px;letter-spacing:-0.19px;">Replacement Pages?</div>
<div class="cb" style="left:714px;top:642.45px"></div>
<div class="t " style="left:735px;top:642.45px;letter-spacing:0.07px;">Priority Shipping</div>
<div class="cb" style="left:714px;top:669.3px"></div>
<div class="t " style="left:735px;top:669.3px;letter-spacing:-0.03px;">Ariel</div>
<div class="gb" style="left:933px;top:448px;width:379px;height:259px"></div><div class="gt" style="left:941px;top:439px;letter-spacing:0.42px;">Item Information</div>
<div class="t " style="left:947px;top:476.5px;letter-spacing:-0.04px;">Call Number</div>
<div class="f " style="left:1116px;top:472px;width:181px;height:24px;line-height:22px;"></div>
<div class="t " style="left:947px;top:504.5px;letter-spacing:-0.01px;">Location</div>
<div class="f " style="left:1116px;top:500px;width:181px;height:24px;line-height:22px;"></div>
<div class="t " style="left:947px;top:533.5px;letter-spacing:0.01px;">Due Date</div>
<div class="f " style="left:1116px;top:529px;width:181px;height:24px;line-height:22px;"><div class="dd "><div class="ar" style="left:5px;top:9px"></div></div></div>
<div class="t " style="left:947px;top:561.5px;letter-spacing:-0.10px;">Reason For Cancellation</div>
<div class="f " style="left:1116px;top:557px;width:181px;height:24px;line-height:22px;"></div>
<div class="t " style="left:947px;top:589.5px;letter-spacing:0.26px;letter-spacing:0">Item Num/Ref Num</div>
<div class="f " style="left:1116px;top:585px;width:97px;height:24px;line-height:22px;"></div>
<div class="f " style="left:1218px;top:585px;width:79px;height:24px;line-height:22px;"></div>
<div class="t " style="left:947px;top:617.5px;letter-spacing:-0.09px;">ISxN</div>
<div class="f " style="left:1116px;top:613px;width:181px;height:24px;line-height:22px;letter-spacing:0.03px;">9781524743444</div>
<div class="t " style="left:947px;top:645.5px;letter-spacing:0.08px;">Special Instructions</div>
<div class="f " style="left:1116px;top:641px;width:181px;height:24px;line-height:22px;"></div>
<div class="t " style="left:947px;top:673.5px;letter-spacing:-0.16px;">Max Cost/Pieces</div>
<div class="f " style="left:1116px;top:669px;width:97px;height:24px;line-height:22px;"></div>
<div class="f " style="left:1218px;top:669px;width:79px;height:24px;line-height:22px;"></div>
<div class="gb" style="left:933px;top:723px;width:379px;height:40px"></div><div class="gt" style="left:941px;top:714px;letter-spacing:0.25px;">Citation Information</div>
<div style="left:4px;top:710px;width:927px;height:40px;border:1px solid #6e6e6e;background:#fff;box-shadow:0 0 0 1px rgba(255,255,255,0.55)"></div>
<div style="left:5px;top:711px;width:925px;height:24px;background:#f0f0f0;border-bottom:1px solid #808080"></div>
<div style="left:177px;top:711px;width:1px;height:23px;background:#9a9a9a"></div>
<div style="left:696.5px;top:711px;width:1px;height:23px;background:#9a9a9a"></div>
<div style="left:808.5px;top:711px;width:1px;height:23px;background:#9a9a9a"></div>
<div class="t " style="left:9.5px;top:714.5px;letter-spacing:-0.01px;">Date</div>
<div class="t " style="left:181.5px;top:714.5px;letter-spacing:0.02px;">Note</div>
<div class="t " style="left:702px;top:714.5px;letter-spacing:0.14px;">Type</div>
<div class="t " style="left:814px;top:714.5px;letter-spacing:-0.09px;">Added By</div>
<div style="left:0;top:741px;width:1315px;height:2px;background:#e6e6e6;border-top:1px solid #cdcdcd"></div>
</body></html>
